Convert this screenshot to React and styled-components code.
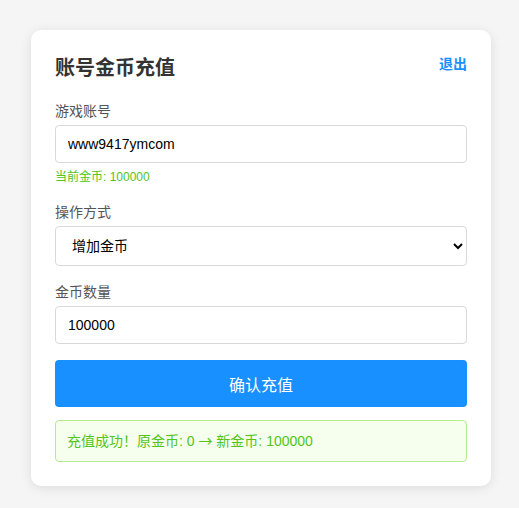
import React, { useState } from 'react';
import styled, { createGlobalStyle } from 'styled-components';

const GlobalStyle = createGlobalStyle`
  body {
    margin: 0;
    background: #f5f5f5;
    font-family: "Liberation Sans", "Noto Sans CJK SC", sans-serif;
  }
`;

const Page = styled.div`
  padding: 30px 0 22px 31px;
`;

const Card = styled.div`
  width: 460px;
  box-sizing: border-box;
  padding: 24px;
  background: #fff;
  border-radius: 10px;
  box-shadow: 0 2px 12px rgba(0, 0, 0, 0.1);
`;

const Header = styled.div`
  display: flex;
  justify-content: space-between;
  align-items: flex-start;
  margin-bottom: 19px;
`;

const Title = styled.h2`
  margin: 0;
  font-size: 20px;
  line-height: 28px;
  font-weight: bold;
  color: #333;
`;

const LogoutButton = styled.button`
  border: none;
  background: none;
  padding: 0;
  font-family: inherit;
  font-size: 14px;
  line-height: 20px;
  font-weight: bold;
  color: #1890ff;
  cursor: pointer;
`;

const Field = styled.div`
  margin-bottom: 16px;
`;

const Label = styled.label`
  display: block;
  font-size: 14px;
  line-height: 21px;
  color: #555;
  margin-bottom: 3px;
`;

const TextInput = styled.input`
  display: block;
  width: 100%;
  height: 38px;
  box-sizing: border-box;
  padding: 0 12px;
  border: 1px solid #d9d9d9;
  border-radius: 4px;
  font-family: inherit;
  font-size: 14px;
  color: #000;
  outline: none;
`;

const Select = styled.select`
  display: block;
  width: 100%;
  height: 40px;
  box-sizing: border-box;
  padding: 0 12px;
  border: 1px solid #d9d9d9;
  border-radius: 4px;
  background: #fff;
  font-family: inherit;
  font-size: 14px;
  color: #000;
  outline: none;
`;

const Tip = styled.div`
  margin-top: 5px;
  font-size: 12px;
  line-height: 18px;
  color: #52c41a;
`;

const SubmitButton = styled.button`
  display: block;
  width: 100%;
  height: 47px;
  border: none;
  border-radius: 4px;
  background: #1890ff;
  color: #fff;
  font-family: inherit;
  font-size: 16px;
  cursor: pointer;
`;

const Message = styled.div`
  margin-top: 13px;
  padding: 10px 11px;
  border: 1px solid #b7eb8f;
  border-radius: 4px;
  background: #f6ffed;
  color: #52c41a;
  font-size: 14px;
  line-height: 19px;
`;

const Arrow = styled.span`
  font-family: "Noto Sans CJK SC", sans-serif;
`;

export default function App() {
  const [account, setAccount] = useState('www9417ymcom');
  const [mode, setMode] = useState('add');
  const [amount, setAmount] = useState('100000');

  return (
    <Page>
      <GlobalStyle />
      <Card>
        <Header>
          <Title>账号金币充值</Title>
          <LogoutButton>退出</LogoutButton>
        </Header>

        <Field>
          <Label>游戏账号</Label>
          <TextInput value={account} onChange={(e) => setAccount(e.target.value)} />
          <Tip>当前金币: 100000</Tip>
        </Field>

        <Field>
          <Label>操作方式</Label>
          <Select value={mode} onChange={(e) => setMode(e.target.value)}>
            <option value="add">增加金币</option>
            <option value="sub">减少金币</option>
          </Select>
        </Field>

        <Field>
          <Label>金币数量</Label>
          <TextInput value={amount} onChange={(e) => setAmount(e.target.value)} />
        </Field>

        <SubmitButton>确认充值</SubmitButton>
        <Message>
          充值成功！原金币: 0 <Arrow>→</Arrow> 新金币: 100000
        </Message>
      </Card>
    </Page>
  );
}
